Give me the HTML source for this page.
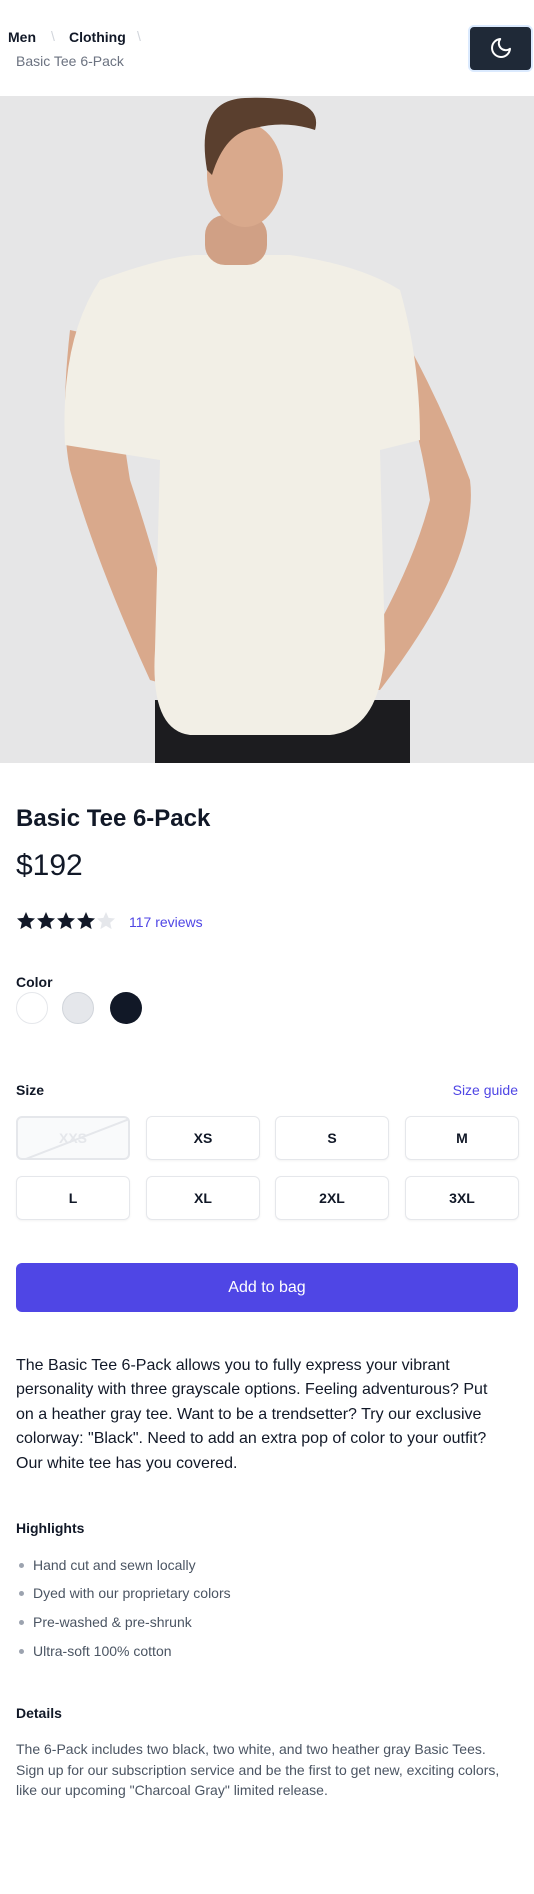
<!DOCTYPE html>
<html><head><meta charset="utf-8"><style>
*{box-sizing:border-box;margin:0;padding:0}
body{width:534px;height:1894px;background:#fff;font-family:"Liberation Sans",sans-serif;color:#111827;position:relative;overflow:hidden}
.a{position:absolute}
.sz{position:absolute;width:114px;height:44px;border:1px solid #e5e7eb;border-radius:6px;display:flex;align-items:center;justify-content:center;font-size:14px;font-weight:bold;color:#111827;box-shadow:0 1px 2px rgba(0,0,0,.05)}
.li{position:absolute;left:16px;font-size:14px;color:#4b5563}
.li:before{content:"";display:inline-block;width:5px;height:5px;border-radius:50%;background:#9ca3af;margin:0 9px 2px 3px}
</style></head><body>
<div class="a" style="left:8px;top:29px;font-size:14px;font-weight:bold">Men</div>
<div class="a" style="left:51px;top:28px;font-size:14px;color:#d1d5db">\</div>
<div class="a" style="left:69px;top:29px;font-size:14px;font-weight:bold">Clothing</div>
<div class="a" style="left:137px;top:28px;font-size:14px;color:#d1d5db">\</div>
<div class="a" style="left:16px;top:53px;font-size:14px;color:#6b7280">Basic Tee 6-Pack</div>
<div class="a" style="left:468px;top:25px;width:65px;height:47px;background:#1f2937;border-radius:6px;border:2px solid #dbeafe"></div>
<svg class="a" style="left:489px;top:36px" width="24" height="24" viewBox="0 0 24 24" fill="none" stroke="#fff" stroke-width="2" stroke-linecap="round" stroke-linejoin="round"><path d="M21 12.8A9 9 0 1 1 11.2 3a7 7 0 0 0 9.8 9.8z"/></svg>

<svg class="a" style="left:0;top:96px" width="534" height="667" viewBox="0 96 534 667">
<rect x="0" y="96" width="534" height="667" fill="#e6e6e7"/>
<rect x="155" y="700" width="255" height="70" fill="#1c1c1f"/>
<path d="M70 330 Q60 420 70 470 Q95 560 150 680 L185 690 Q170 600 130 480 Q120 420 115 340Z" fill="#d9a98c"/>
<path d="M400 330 Q440 400 470 480 Q480 560 380 690 L340 690 Q410 580 430 500 Q420 430 395 360Z" fill="#d9a98c"/>
<path d="M100 280 Q160 258 195 255 L290 255 Q360 265 400 290 Q420 360 420 440 L380 450 L385 650 Q380 730 330 735 L190 735 Q150 730 155 650 L160 460 L65 445 Q60 340 100 280Z" fill="#f2efe6"/>
<rect x="205" y="215" width="62" height="50" rx="20" fill="#d0a085"/>
<ellipse cx="245" cy="175" rx="38" ry="52" fill="#d9a98c"/>
<path d="M207 170 Q195 100 245 98 Q325 95 315 130 Q285 120 255 128 Q225 132 212 175Z" fill="#5a3f2e"/>
</svg>

<div class="a" style="left:16px;top:805px;font-size:24px;font-weight:bold">Basic Tee 6-Pack</div>
<div class="a" style="left:16px;top:849px;font-size:30px">$192</div>
<svg class="a" style="left:16px;top:911px" width="100" height="20" viewBox="0 0 100 20">
<defs><path id="s" d="M10 1l2.6 5.9 6.4.6-4.8 4.3 1.4 6.3L10 14.8 4.4 18.1l1.4-6.3L1 7.5l6.4-.6z"/></defs>
<use href="#s" fill="#111827"/><use href="#s" x="20" fill="#111827"/><use href="#s" x="40" fill="#111827"/><use href="#s" x="60" fill="#111827"/><use href="#s" x="80" fill="#e5e7eb"/>
</svg>
<div class="a" style="left:129px;top:914px;font-size:14px;color:#4f46e5">117 reviews</div>
<div class="a" style="left:16px;top:974px;font-size:14px;font-weight:bold">Color</div>
<div class="a" style="left:16px;top:992px;width:32px;height:32px;border-radius:50%;background:#fff;border:1px solid #e5e7eb"></div>
<div class="a" style="left:62px;top:992px;width:32px;height:32px;border-radius:50%;background:#e5e7eb;border:1px solid #d1d5db"></div>
<div class="a" style="left:110px;top:992px;width:32px;height:32px;border-radius:50%;background:#111827"></div>
<div class="a" style="left:16px;top:1082px;font-size:14px;font-weight:bold">Size</div>
<div class="a" style="right:16px;top:1082px;font-size:14px;color:#4f46e5">Size guide</div>
<div class="sz" style="left:16px;top:1116px;background:#f9fafb;border:2px solid #e5e7eb;color:#e5e7eb;box-shadow:none;overflow:hidden">XXS<svg class="a" style="left:0;top:0" width="114" height="44" preserveAspectRatio="none" viewBox="0 0 114 44"><line x1="0" y1="44" x2="114" y2="0" stroke="#e5e7eb" stroke-width="2"/></svg></div>
<div class="sz" style="left:146px;top:1116px">XS</div>
<div class="sz" style="left:275px;top:1116px">S</div>
<div class="sz" style="left:405px;top:1116px">M</div>
<div class="sz" style="left:16px;top:1176px">L</div>
<div class="sz" style="left:146px;top:1176px">XL</div>
<div class="sz" style="left:275px;top:1176px">2XL</div>
<div class="sz" style="left:405px;top:1176px">3XL</div>
<div class="a" style="left:16px;top:1263px;width:502px;height:49px;background:#4f46e5;border-radius:6px;color:#fff;font-size:16px;display:flex;align-items:center;justify-content:center">Add to bag</div>
<div class="a" style="left:16px;top:1354px;width:490px;font-size:16px;line-height:24.4px;color:#111827">The Basic Tee 6-Pack allows you to fully express your vibrant personality with three grayscale options. Feeling adventurous? Put on a heather gray tee. Want to be a trendsetter? Try our exclusive colorway: "Black". Need to add an extra pop of color to your outfit? Our white tee has you covered.</div>
<div class="a" style="left:16px;top:1520px;font-size:14px;font-weight:bold">Highlights</div>
<div class="li" style="top:1557px">Hand cut and sewn locally</div>
<div class="li" style="top:1585px">Dyed with our proprietary colors</div>
<div class="li" style="top:1614px">Pre-washed &amp; pre-shrunk</div>
<div class="li" style="top:1643px">Ultra-soft 100% cotton</div>
<div class="a" style="left:16px;top:1705px;font-size:14px;font-weight:bold">Details</div>
<div class="a" style="left:16px;top:1739px;width:490px;font-size:14px;line-height:20.5px;color:#4b5563">The 6-Pack includes two black, two white, and two heather gray Basic Tees. Sign up for our subscription service and be the first to get new, exciting colors, like our upcoming "Charcoal Gray" limited release.</div>
</body></html>
